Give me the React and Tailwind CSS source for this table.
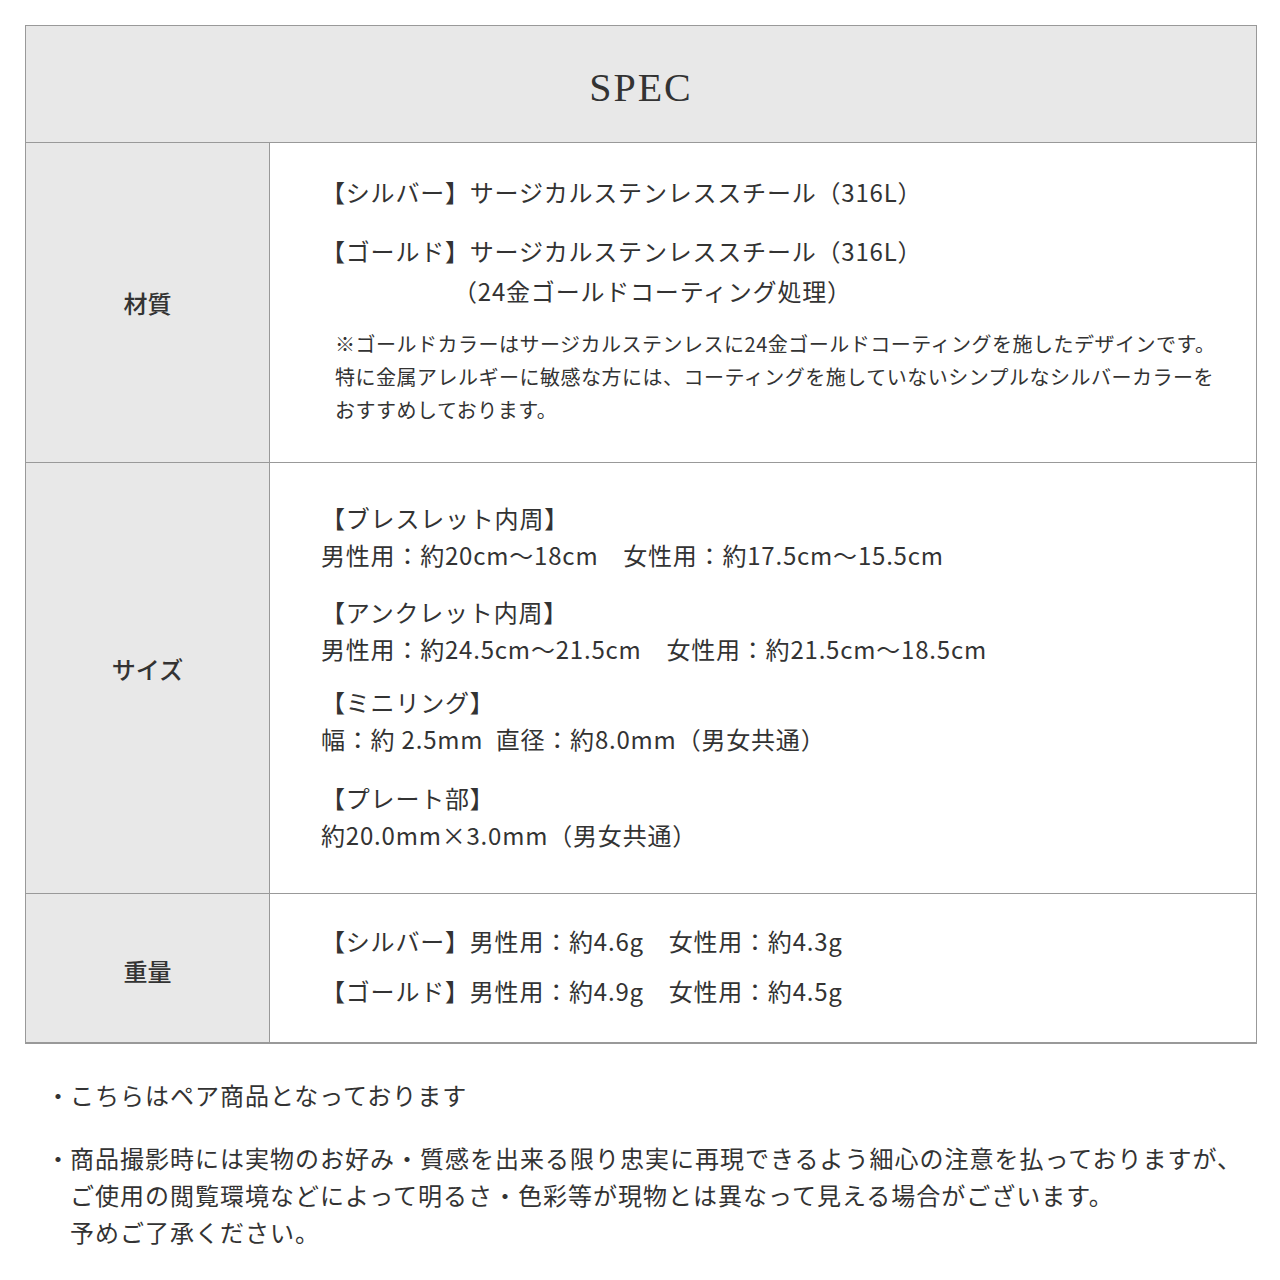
const font = { fontFamily: '"Noto Sans CJK JP", "Noto Sans", sans-serif' };

const Row = ({ label, height, children, last, labelClass = "", contentClass = "" }) => (
  <div className={`flex ${last ? "" : "border-b border-[#999]"} ${height}`}>
    <div className="w-[244px] shrink-0 bg-[#e8e8e8] border-r border-[#999] flex items-center justify-center text-[24px] font-medium text-[#333]">
      <span className={labelClass}>{label}</span>
    </div>
    <div className={`flex-1 flex flex-col justify-center pl-[51px] pr-6 text-[24px] tracking-[0.8px] text-[#333] ${contentClass}`}>
      {children}
    </div>
  </div>
);

const App = () => {
  return (
    <div className="w-[1280px] h-[1280px] bg-white pt-[25px]" style={font}>
      <div className="ml-[25px] w-[1232px] border border-[#999]">
        <div className="h-[117px] bg-[#e8e8e8] border-b border-[#999] flex items-center justify-center pt-2">
          <h1
            className="text-[40px] tracking-[2px] text-[#333]"
            style={{ fontFamily: '"Liberation Serif", "Times New Roman", serif' }}
          >
            SPEC
          </h1>
        </div>

        <Row label="材質" height="h-[320px]" contentClass="pb-[8px]">
          <p className="leading-[40px]">【シルバー】サージカルステンレススチール（316L）</p>
          <p className="leading-[40px] mt-[19px]">
            【ゴールド】サージカルステンレススチール（316L）
            <br />
            <span className="pl-[132px]">（24金ゴールドコーティング処理）</span>
          </p>
          <p className="text-[20px] tracking-[0.5px] leading-[33px] mt-[16px] pl-[14px]">
            ※ゴールドカラーはサージカルステンレスに24金ゴールドコーティングを施したデザインです。
            <br />
            特に金属アレルギーに敏感な方には、コーティングを施していないシンプルなシルバーカラーを
            <br />
            おすすめしております。
          </p>
        </Row>

        <Row label="サイズ" height="h-[431px]" labelClass="-mt-[18px]">
          <div className="leading-[37px] -mt-[4px]">
            <p>【ブレスレット内周】</p>
            <p>男性用：約20cm〜18cm　女性用：約17.5cm〜15.5cm</p>
            <p className="mt-[20px]">【アンクレット内周】</p>
            <p>男性用：約24.5cm〜21.5cm　女性用：約21.5cm〜18.5cm</p>
            <p className="mt-[16px]">【ミニリング】</p>
            <p>幅：約 2.5mm&nbsp;&nbsp;直径：約8.0mm（男女共通）</p>
            <p className="mt-[22px]">【プレート部】</p>
            <p>約20.0mm×3.0mm（男女共通）</p>
          </div>
        </Row>

        <Row label="重量" height="h-[149px]" labelClass="mt-[6px]" contentClass="pb-[4px]">
          <p className="leading-[40px]">【シルバー】男性用：約4.6g　女性用：約4.3g</p>
          <p className="leading-[40px] mt-[10px]">【ゴールド】男性用：約4.9g　女性用：約4.5g</p>
        </Row>
      </div>

      <div className="mt-[32px] pl-[46px] text-[24px] tracking-[1px] text-[#333] leading-[37px]">
        <div className="flex">
          <span className="w-[24px] shrink-0">・</span>
          <p>こちらはペア商品となっております</p>
        </div>
        <div className="flex mt-[26px]">
          <span className="w-[24px] shrink-0">・</span>
          <p>
            商品撮影時には実物のお好み・質感を出来る限り忠実に再現できるよう細心の注意を払っておりますが、
            <br />
            ご使用の閲覧環境などによって明るさ・色彩等が現物とは異なって見える場合がございます。
            <br />
            予めご了承ください。
          </p>
        </div>
      </div>
    </div>
  );
};

export default App;
